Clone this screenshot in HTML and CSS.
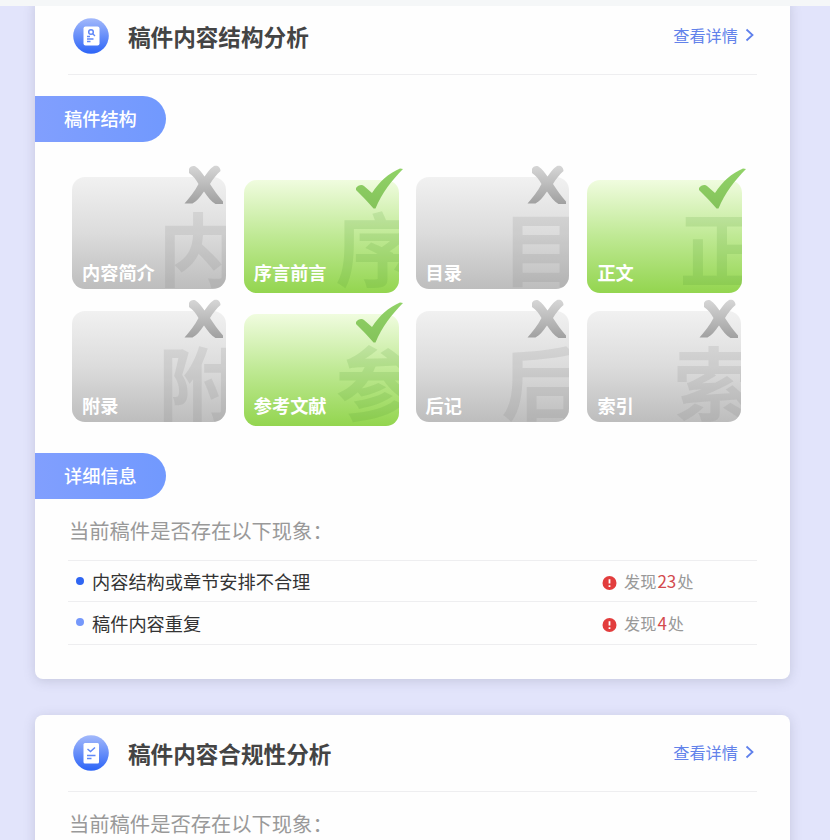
FILE: index.html
```html
<!DOCTYPE html>
<html lang="zh-CN">

<head>
    <meta charset="UTF-8">
    <meta name="viewport" content="width=device-width, initial-scale=1.0">
    <title>稿件分析</title>
    <link rel="stylesheet" href="styles.css">
</head>

<body>
    <!-- Shared icons -->
    <svg class="defs" width="0" height="0">
        <defs>
            <linearGradient id="blue" x1="0" y1="0" x2="0" y2="1">
                <stop offset="0" stop-color="#a3b9fb" />
                <stop offset="1" stop-color="#2c64f7" />
            </linearGradient>
            <linearGradient id="gray" x1="0" y1="0" x2="0" y2="1">
                <stop offset="0" stop-color="#d6d6d6" />
                <stop offset="1" stop-color="#a0a0a0" />
            </linearGradient>
            <linearGradient id="green" x1="0" y1="0" x2="0" y2="1">
                <stop offset="0" stop-color="#91d268" />
                <stop offset="1" stop-color="#84c35a" />
            </linearGradient>
            <symbol id="cross" viewBox="0 0 40 40">
                <path fill="url(#gray)" d="M5 4C6 1.500 9 .3 11.500 1.500C15 3.500 18 8 20.500 11.500C23 8 26.500 3 30 1C33.500 0 36.500 2 36.500 6C32.500 9.500 29 14 26 19C30 25 34 31 39 36.500V39H31.500C27 36.500 23.500 31.500 20 26.500C16.500 31.500 12.500 36.500 8.500 38.500H.5C5.500 33 11 26 14.500 19C12 14.500 9 10.500 5 8Z" />
            </symbol>
            <symbol id="check" viewBox="0 0 48 42">
                <path fill="url(#green)" d="M1 20C3 17 7 16 9 18L17 25C24 14 34 5 45 .5L48 1C37 12 27 25 20.500 40.500H18.500C13 34 7 28 1 22Z" />
            </symbol>
            <symbol id="warn" viewBox="0 0 14 14">
                <circle cx="7" cy="7" r="7" fill="#e23d3d" />
                <path d="M7 3.200V7.600M7 9.200V10.900" stroke="#fff" stroke-width="1.800" />
            </symbol>
            <symbol id="arrow" viewBox="0 0 9 14">
                <path d="M1.500 1.500L7.500 7L1.500 12.500" fill="none" stroke="#5f80ec" stroke-width="1.800" />
            </symbol>
        </defs>
    </svg>

    <div class="topbar"></div>

    <main class="page">
        <section class="card">
            <header class="card-header">
                <svg class="card-icon" viewBox="0 0 36 36">
                    <circle cx="18" cy="18" r="17.800" fill="url(#blue)" />
                    <rect x="10.500" y="8.500" width="16" height="19" rx="2" fill="#fff" />
                    <circle cx="18" cy="14" r="2.300" fill="none" stroke="#5f88f8" stroke-width="1.500" />
                    <path d="M19.500 15.500L22 18M14 18.500H17M14 21H20.500M14 23.500H17.500" stroke="#5f88f8" stroke-width="1.400" />
                </svg>
                <h2>稿件内容结构分析</h2>
                <a class="more" href="#">查看详情<svg><use href="#arrow" /></svg></a>
            </header>

            <h3 class="tag">稿件结构</h3>
            <div class="parts">
                <div class="part"><span class="mark">内</span><span class="name">内容简介</span><svg class="state"><use href="#cross" /></svg></div>
                <div class="part ok"><span class="mark">序</span><span class="name">序言前言</span><svg class="state"><use href="#check" /></svg></div>
                <div class="part"><span class="mark">目</span><span class="name">目录</span><svg class="state"><use href="#cross" /></svg></div>
                <div class="part ok"><span class="mark">正</span><span class="name">正文</span><svg class="state"><use href="#check" /></svg></div>
                <div class="part"><span class="mark">附</span><span class="name">附录</span><svg class="state"><use href="#cross" /></svg></div>
                <div class="part ok"><span class="mark">参</span><span class="name">参考文献</span><svg class="state"><use href="#check" /></svg></div>
                <div class="part"><span class="mark">后</span><span class="name">后记</span><svg class="state"><use href="#cross" /></svg></div>
                <div class="part"><span class="mark">索</span><span class="name">索引</span><svg class="state"><use href="#cross" /></svg></div>
            </div>

            <h3 class="tag">详细信息</h3>
            <p class="question">当前稿件是否存在以下现象：</p>
            <ul class="issues">
                <li>
                    <span class="issue">内容结构或章节安排不合理</span>
                    <svg class="warn"><use href="#warn" /></svg>
                    <span class="found">发现<b>23</b>处</span>
                </li>
                <li class="light">
                    <span class="issue">稿件内容重复</span>
                    <svg class="warn"><use href="#warn" /></svg>
                    <span class="found">发现<b>4</b>处</span>
                </li>
            </ul>
        </section>

        <section class="card">
            <header class="card-header">
                <svg class="card-icon" viewBox="0 0 36 36">
                    <circle cx="18" cy="18" r="17.800" fill="url(#blue)" />
                    <rect x="10.500" y="8" width="15.500" height="20.500" rx="1.500" fill="#fff" />
                    <path d="M14.500 14L17.500 16.500L22 12.500M14 20.500H22.500M14 23.500H18.500" fill="none" stroke="#5f88f8" stroke-width="1.500" />
                </svg>
                <h2>稿件内容合规性分析</h2>
                <a class="more" href="#">查看详情<svg><use href="#arrow" /></svg></a>
            </header>
            <p class="question">当前稿件是否存在以下现象：</p>
        </section>
    </main>
</body>

</html>
```
FILE: styles.css
```css
* {
    box-sizing: border-box;
}

body {
    height: 840px;
    margin: 0;
    overflow: hidden;
    display: flex;
    flex-direction: column;
    background-color: #e2e4fb;
    font-family: "Noto Sans CJK SC", sans-serif;
}

h2,
h3,
p,
ul {
    margin: 0;
    padding: 0;
}

.defs {
    position: absolute;
}

.topbar {
    flex: none;
    height: 6px;
    background-color: #f5f7f8;
}

.page {
    flex: 1;
    min-height: 0;
    overflow: hidden;
    padding: 0 40px 0 35px;
}

.card {
    width: 755px;
    height: 681px;
    margin-bottom: 36px;
    background-color: #fefefe;
    border-radius: 8px;
    box-shadow: 0 2px 12px rgba(90, 95, 120, 0.22);
}

/* The first card is scrolled slightly under the top bar */
.card:first-child {
    margin-top: -8px;
}

.card-header {
    display: flex;
    align-items: center;
    height: 77px;
    margin: 0 33px;
    padding: 0 3px 0 5px;
    border-bottom: 1px solid #eeeef0;
}

.card-icon {
    width: 36px;
    height: 36px;
    margin-right: 19px;
}

.card-header h2 {
    margin-top: 2px;
    color: #444;
    font-size: 22.6px;
    line-height: 34px;
}

.more {
    display: flex;
    align-items: center;
    gap: 7px;
    margin: -2px 0 0 auto;
    color: #6282ea;
    font-size: 16.2px;
    line-height: 24px;
    text-decoration: none;
}

.more svg {
    width: 9px;
    height: 14px;
}

.tag {
    width: 131px;
    height: 46px;
    margin-top: 21px;
    padding-left: 29px;
    border-radius: 0 23px 23px 0;
    background: linear-gradient(90deg, #819ffe, #7199fe);
    color: #fff;
    font-size: 18.2px;
    font-weight: 500;
    line-height: 45px;
}

.parts {
    display: grid;
    grid-template-columns: repeat(4, 153.8px);
    grid-template-rows: 112px 111px;
    gap: 22px 18px;
    margin: 35px 0 31px 37px;
}

.parts + .tag {
    margin-top: 0;
}

.part {
    position: relative;
    display: flex;
    align-items: flex-end;
    padding: 0 0 4px 10px;
    border-radius: 13px;
    background: linear-gradient(#f1f1f1, #dcdcdc 50%, #bdbdbd);
}

.part.ok {
    margin: 3px -1px -4px 0;
    padding-bottom: 8px;
    background: linear-gradient(#f0fcdf, #bfe994 50%, #93d54f);
}

.name {
    position: relative;
    color: #fff;
    font-size: 18.2px;
    font-weight: bold;
    line-height: 26px;
}

/* Large first character, cut off by the tile's edges */
.mark {
    position: absolute;
    inset: 0;
    overflow: hidden;
    padding: 28px 0 0 86px;
    border-radius: 13px;
    color: rgba(110, 110, 110, 0.14);
    font-size: 80px;
    font-weight: bold;
    line-height: 80px;
    white-space: nowrap;
}

.ok .mark {
    padding: 25px 0 0 92px;
    color: rgba(75, 145, 50, 0.15);
}

.state {
    position: absolute;
    top: -12px;
    right: 2px;
    width: 40px;
    height: 40px;
}

.ok .state {
    right: -4px;
    width: 48px;
    height: 42px;
}

.question {
    height: 61px;
    padding-left: 34px;
    color: #999;
    font-size: 20.3px;
    line-height: 62px;
}

.issues {
    margin: 0 33px;
    border-top: 1px solid #eeeef0;
    list-style: none;
}

.issues li {
    display: flex;
    align-items: center;
    height: 41px;
    padding-left: 8px;
    border-bottom: 1px solid #eeeef0;
}

.issues li.light {
    height: 43px;
}

.issues li::before {
    content: "";
    width: 8px;
    height: 8px;
    margin-right: 8px;
    border-radius: 50%;
    background-color: #2f66f3;
}

.issues li.light::before {
    margin-top: -2px;
    background-color: #7598fb;
}

.issue {
    width: 510px;
    color: #333;
    font-size: 18.2px;
    line-height: 26px;
}

.warn {
    width: 15px;
    height: 14px;
    margin-top: 4px;
}

.found {
    margin-left: 7px;
    color: #999;
    font-size: 16.2px;
    line-height: 24px;
}

.found b {
    color: #d34a4d;
    font-weight: normal;
    font-size: 17px;
    margin: 0 1px;
}
```
